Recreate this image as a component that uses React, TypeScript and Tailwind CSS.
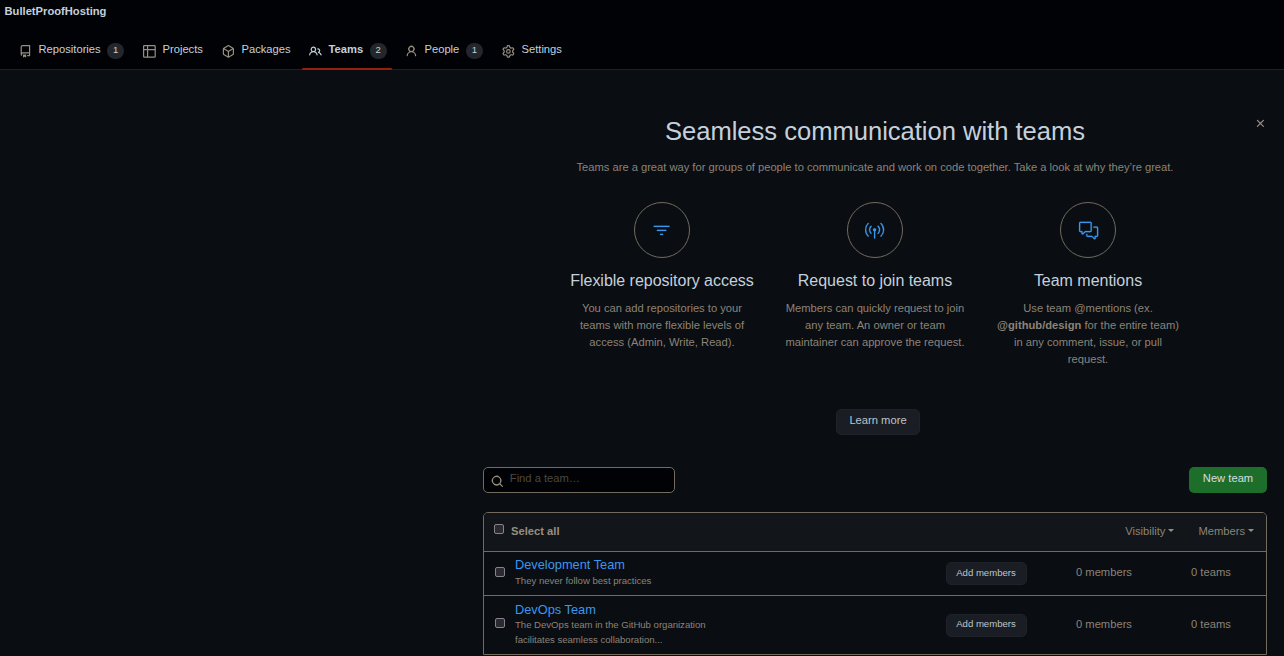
import React from "react";
import { GoFilter, GoBroadcast, GoCommentDiscussion } from "react-icons/go";

const paths = {
  repo: "M2 2.5A2.5 2.5 0 0 1 4.5 0h8.75a.75.75 0 0 1 .75.75v12.5a.75.75 0 0 1-.75.75h-2.5a.75.75 0 0 1 0-1.5h1.75v-2h-8a1 1 0 0 0-.714 1.7.75.75 0 1 1-1.072 1.05A2.495 2.495 0 0 1 2 11.5Zm10.5-1h-8a1 1 0 0 0-1 1v6.708A2.486 2.486 0 0 1 4.5 9h8ZM5 12.25a.25.25 0 0 1 .25-.25h3.5a.25.25 0 0 1 .25.25v3.25a.25.25 0 0 1-.4.2l-1.45-1.087a.249.249 0 0 0-.3 0L5.4 15.7a.25.25 0 0 1-.4-.2Z",
  table: "M0 1.75C0 .784.784 0 1.75 0h12.5C15.216 0 16 .784 16 1.75v12.5A1.75 1.75 0 0 1 14.25 16H1.75A1.75 1.75 0 0 1 0 14.25ZM6.5 6.5v8h7.75a.25.25 0 0 0 .25-.25V6.5Zm8-1.5V1.75a.25.25 0 0 0-.25-.25H6.5V5Zm-13 1.5v7.75c0 .138.112.25.25.25H5v-8ZM5 5V1.5H1.75a.25.25 0 0 0-.25.25V5Z",
  pkg: "m8.878.392 5.25 3.045c.54.314.872.89.872 1.514v6.098a1.75 1.75 0 0 1-.872 1.514l-5.25 3.045a1.75 1.75 0 0 1-1.756 0l-5.25-3.045A1.75 1.75 0 0 1 1 11.049V4.951c0-.624.332-1.201.872-1.514L7.122.392a1.75 1.75 0 0 1 1.756 0ZM7.875 1.69l-4.63 2.685L8 7.133l4.755-2.758-4.63-2.685a.248.248 0 0 0-.25 0ZM2.5 5.677v5.372c0 .09.047.171.125.216l4.625 2.683V8.432Zm6.25 8.271 4.625-2.683a.25.25 0 0 0 .125-.216V5.677L8.75 8.432Z",
  people: "M2 5.5a3.5 3.5 0 1 1 5.898 2.549 5.508 5.508 0 0 1 3.034 4.084.75.75 0 1 1-1.482.235 4 4 0 0 0-7.9 0 .75.75 0 0 1-1.482-.236A5.507 5.507 0 0 1 3.102 8.05 3.493 3.493 0 0 1 2 5.5ZM11 4a3.001 3.001 0 0 1 2.22 5.018 5.01 5.01 0 0 1 2.56 3.012.749.749 0 0 1-.885.954.752.752 0 0 1-.549-.514 3.507 3.507 0 0 0-2.522-2.372.75.75 0 0 1-.574-.73v-.352a.75.75 0 0 1 .416-.672A1.5 1.5 0 0 0 11 5.5.75.75 0 0 1 11 4Zm-5.5-.5a2 2 0 1 0-.001 3.999A2 2 0 0 0 5.5 3.5Z",
  person: "M10.561 8.073a6.005 6.005 0 0 1 3.432 5.142.75.75 0 1 1-1.498.07 4.5 4.5 0 0 0-8.99 0 .75.75 0 0 1-1.498-.07 6.004 6.004 0 0 1 3.431-5.142 3.999 3.999 0 1 1 5.123 0ZM10.5 5a2.5 2.5 0 1 0-5 0 2.5 2.5 0 0 0 5 0Z",
  gear: "M8 0a8.2 8.2 0 0 1 .701.031C9.444.095 9.99.645 10.16 1.29l.288 1.107c.018.066.079.158.212.224.231.114.454.243.668.386.123.082.233.09.299.071l1.103-.303c.644-.176 1.392.021 1.82.63.27.385.506.792.704 1.218.315.675.111 1.422-.364 1.891l-.814.806c-.049.048-.098.147-.088.294.016.257.016.515 0 .772-.01.147.038.246.088.294l.814.806c.475.469.679 1.216.364 1.891a7.977 7.977 0 0 1-.704 1.217c-.428.61-1.176.807-1.82.63l-1.102-.302c-.067-.019-.177-.011-.3.071a5.909 5.909 0 0 1-.668.386c-.133.066-.194.158-.211.224l-.29 1.106c-.168.646-.715 1.196-1.458 1.26a8.006 8.006 0 0 1-1.402 0c-.743-.064-1.289-.614-1.458-1.26l-.289-1.106c-.018-.066-.079-.158-.212-.224a5.738 5.738 0 0 1-.668-.386c-.123-.082-.233-.09-.299-.071l-1.103.303c-.644.176-1.392-.021-1.82-.63a8.12 8.12 0 0 1-.704-1.218c-.315-.675-.111-1.422.363-1.891l.815-.806c.05-.048.098-.147.088-.294a6.214 6.214 0 0 1 0-.772c.01-.147-.038-.246-.088-.294l-.815-.806C.635 6.045.431 5.298.746 4.623a7.92 7.92 0 0 1 .704-1.217c.428-.61 1.176-.807 1.82-.63l1.102.302c.067.019.177.011.3-.071.214-.143.437-.272.668-.386.133-.066.194-.158.211-.224l.29-1.106C6.009.645 6.556.095 7.299.03 7.53.01 7.764 0 8 0Zm-.571 1.525c-.036.003-.108.036-.137.146l-.289 1.105c-.147.561-.549.967-.998 1.189-.173.086-.34.183-.5.29-.417.278-.97.423-1.529.27l-1.103-.303c-.109-.03-.175.016-.195.045-.22.312-.412.644-.573.99-.014.031-.021.11.059.19l.815.806c.411.406.562.957.53 1.456a4.709 4.709 0 0 0 0 .582c.032.499-.119 1.05-.53 1.456l-.815.806c-.081.08-.073.159-.059.19.162.346.353.677.573.989.02.03.085.076.195.046l1.102-.303c.56-.153 1.113-.008 1.53.27.161.107.328.204.501.29.447.222.85.629.997 1.189l.289 1.105c.029.109.101.143.137.146a6.6 6.6 0 0 0 1.142 0c.036-.003.108-.036.137-.146l.289-1.105c.147-.561.549-.967.998-1.189.173-.086.34-.183.5-.29.417-.278.97-.423 1.529-.27l1.103.303c.109.029.175-.016.195-.045.22-.313.411-.644.573-.99.014-.031.021-.11-.059-.19l-.815-.806c-.411-.406-.562-.957-.53-1.456a4.709 4.709 0 0 0 0-.582c-.032-.499.119-1.05.53-1.456l.815-.806c.081-.08.073-.159.059-.19a6.464 6.464 0 0 0-.573-.989c-.02-.03-.085-.076-.195-.046l-1.102.303c-.56.153-1.113.008-1.53-.27a4.44 4.44 0 0 0-.501-.29c-.447-.222-.85-.629-.997-1.189l-.289-1.105c-.029-.11-.101-.143-.137-.146a6.6 6.6 0 0 0-1.142 0ZM11 8a3 3 0 1 1-6 0 3 3 0 0 1 6 0ZM9.5 8a1.5 1.5 0 1 0-3.001.001A1.5 1.5 0 0 0 9.5 8Z",
  search: "M10.68 11.74a6 6 0 0 1-7.922-8.982 6 6 0 0 1 8.982 7.922l3.04 3.04a.749.749 0 0 1-.326 1.275.749.749 0 0 1-.734-.215ZM11.5 7a4.499 4.499 0 1 0-8.997 0A4.499 4.499 0 0 0 11.5 7Z",
  x: "M3.72 3.72a.75.75 0 0 1 1.06 0L8 6.94l3.22-3.22a.749.749 0 0 1 1.275.326.749.749 0 0 1-.215.734L9.06 8l3.22 3.22a.749.749 0 0 1-.326 1.275.749.749 0 0 1-.734-.215L8 9.06l-3.22 3.22a.751.751 0 0 1-1.042-.018.751.751 0 0 1-.018-1.042L6.94 8 3.72 4.78a.75.75 0 0 1 0-1.06Z",
};

function Icon({ name, className = "" }: { name: keyof typeof paths; className?: string }) {
  return (
    <svg viewBox="0 0 16 16" className={"size-[12.8px] shrink-0 fill-current " + className}>
      <path d={paths[name]} />
    </svg>
  );
}

type Tab = { icon: keyof typeof paths; label: string; width: string; count?: number; active?: boolean };

const tabs: Tab[] = [
  { icon: "repo", label: "Repositories", width: "w-[124px]", count: 1 },
  { icon: "table", label: "Projects", width: "w-[79px]" },
  { icon: "pkg", label: "Packages", width: "w-[87px]" },
  { icon: "people", label: "Teams", width: "w-[96px]", count: 2, active: true },
  { icon: "person", label: "People", width: "w-[97px]", count: 1 },
  { icon: "gear", label: "Settings", width: "w-[66px]" },
];

function NavTab({ tab }: { tab: Tab }) {
  return (
    <a className={"relative flex h-[40px] items-start " + tab.width}>
      <Icon name={tab.icon} className={"mt-[15px] " + (tab.active ? "text-[#c4d1dc]" : "text-[#988f81]")} />
      <span className={"ml-[6.7px] mt-[11px] leading-4 text-[#c4d1dc] " + (tab.active ? "font-bold" : "")}>{tab.label}</span>
      {tab.count !== undefined && (
        <span className="ml-[6.5px] mt-[12.5px] flex h-4 w-[17px] items-center justify-center rounded-full bg-[#23272d] pb-0.5 text-[9.6px] leading-none text-[#c4d1dc]">
          {tab.count}
        </span>
      )}
      {tab.active && <span className="absolute -left-[7px] bottom-0 h-[2px] w-[90px] rounded-full bg-[#96200b]" />}
    </a>
  );
}

function Feature({ icon, title, children }: { icon: React.ReactNode; title: string; children: React.ReactNode }) {
  return (
    <div className="flex w-[213px] flex-col items-center text-center">
      <div className="flex size-14 items-center justify-center rounded-full border border-[#736b5e] pt-px text-[#3b97ee]">
        {icon}
      </div>
      <h3 className="mt-[11px] whitespace-nowrap text-[16px] leading-6 tracking-[-0.02px] text-[#c4d1dc]">{title}</h3>
      <p className="mt-[7px] whitespace-nowrap leading-[17px]">{children}</p>
    </div>
  );
}

function Box({ className = "" }: { className?: string }) {
  return <span className={"size-[10px] shrink-0 rounded-[2px] border border-[#85838d] bg-[#2b2a33] " + className} />;
}

function Caret() {
  return <span className="ml-[3px] border-x-[3px] border-t-[3px] border-x-transparent border-t-[#988f81]" />;
}

function TeamRow({
  name,
  desc,
  className,
  titleClass = "",
}: {
  name: string;
  desc: React.ReactNode;
  className: string;
  titleClass?: string;
}) {
  return (
    <div className={"flex items-center border-t border-[#736b5e] pl-[11px] " + className}>
      <Box className="-mt-[4px]" />
      <div className="-mt-[4px] ml-[10px] w-[431px]">
        <div className={"text-[12.8px] leading-[17px] text-[#3b97ee] " + titleClass}>{name}</div>
        <div className="text-[9.6px] leading-[15px] tracking-[-0.02px]">{desc}</div>
      </div>
      <button className="h-[23px] w-[81px] rounded-[5px] border border-[#1e2229] bg-[#1a1d24] pb-0.5 pr-px text-[9.6px] leading-none text-[#bcc5cc]">
        Add members
      </button>
      <span className="-mt-0.5 ml-[49px] w-[115px]">0 members</span>
      <span className="-mt-0.5">0 teams</span>
    </div>
  );
}

export default function App() {
  return (
    <div className="h-[656px] w-[1284px] overflow-hidden bg-[#0a0d12] font-['Liberation_Sans',Arial,sans-serif] text-[11.2px] text-[#8b8478]">
      <header className="flex h-[70px] flex-col justify-between border-b border-[#1d2025] bg-[#010205]">
        <h1 className="pl-[4.5px] pt-[3px] font-bold leading-4 text-[#c4d1dc]">BulletProofHosting</h1>
        <nav className="-mb-px flex pl-[19px]">
          {tabs.map((t) => (
            <NavTab key={t.label} tab={t} />
          ))}
        </nav>
      </header>

      <main className="ml-[483px] w-[784px]">
        <section className="relative flex flex-col items-center pt-[44px]">
          <Icon name="x" className="absolute right-0 top-[47px] text-[#988f81]" />
          <h2 className="text-[25.6px] leading-[34px] tracking-[-0.03px] text-[#c4d1dc]">Seamless communication with teams</h2>
          <p className="mt-[11px] whitespace-nowrap leading-4 tracking-[-0.02px]">
            Teams are a great way for groups of people to communicate and work on code together. Take a look at why they’re great.
          </p>
          <div className="mt-[27px] flex h-[207px]">
            <Feature icon={<GoFilter className="size-[19.2px] stroke-[0.3]" />} title="Flexible repository access">
              You can add repositories to your
              <br />
              teams with more flexible levels of
              <br />
              access (Admin, Write, Read).
            </Feature>
            <Feature icon={<GoBroadcast className="size-[19.2px] stroke-[0.3]" />} title="Request to join teams">
              Members can quickly request to join
              <br />
              any team. An owner or team
              <br />
              maintainer can approve the request.
            </Feature>
            <Feature icon={<GoCommentDiscussion className="ml-px size-[19.2px] overflow-visible stroke-[0.3]" />} title="Team mentions">
              Use team @mentions (ex.
              <br />
              <b>@github/design</b> for the entire team)
              <br />
              in any comment, issue, or pull
              <br />
              request.
            </Feature>
          </div>
          <button className="ml-[6px] h-[26px] w-[84px] rounded-[5px] border border-[#1e2229] bg-[#1a1d24] pb-[3px] leading-none text-[#bcc5cc]">
            Learn more
          </button>
        </section>

        <div className="mt-8 flex justify-between">
          <div className="flex h-[26px] w-[192px] items-start rounded-[5px] border border-[#736b5e] bg-[#010205] pl-[7px]">
            <Icon name="search" className="mt-[7px] text-[#988f81]" />
            <span className="ml-[6px] mt-[2px] leading-4 text-[#4c4841]">Find a team…</span>
          </div>
          <button className="h-[26px] w-[78px] rounded-[5px] bg-[#1e6e2b] pb-[3px] leading-none text-[#d5dde1]">New team</button>
        </div>

        <section className="mt-[19px] overflow-hidden rounded-t-[5px] border border-[#736b5e]">
          <div className="flex h-[38px] items-center bg-[#121519] pb-[2px] pl-[10px] pr-[12px]">
            <Box className="-mt-[5px]" />
            <b className="ml-[7px] flex-1 text-[#988f81]">Select all</b>
            <span className="flex items-center">
              Visibility
              <Caret />
            </span>
            <span className="ml-6 flex items-center">
              Members
              <Caret />
            </span>
          </div>
          <TeamRow className="h-[44px]" name="Development Team" desc="They never follow best practices" />
          <TeamRow
            className="h-[59px]"
            titleClass="-mb-px pt-px"
            name="DevOps Team"
            desc={
              <>
                The DevOps team in the GitHub organization
                <br />
                facilitates seamless collaboration...
              </>
            }
          />
        </section>
      </main>
    </div>
  );
}
